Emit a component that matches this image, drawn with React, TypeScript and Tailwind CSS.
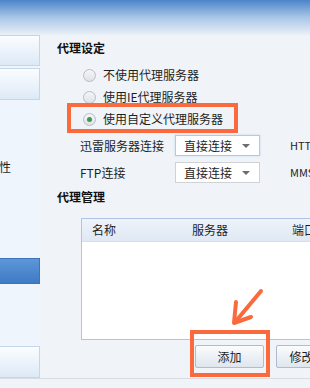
import React from "react";

const FONT = { fontFamily: '"Noto Sans CJK SC", "Liberation Sans", sans-serif' };

function Radio({ checked, label }: { checked?: boolean; label: string }) {
  return (
    <div className="flex h-[22px] items-center gap-[7px]">
      <span className="flex h-[13px] w-[13px] items-center justify-center rounded-full border border-[#b9bec6] bg-gradient-to-b from-[#f4f5f7] to-[#dfe2e6]">
        {checked && <span className="h-[5px] w-[5px] rounded-full bg-[#3c9a48]" />}
      </span>
      <span className="text-[12px] leading-none text-[#1e1e1e]">{label}</span>
    </div>
  );
}

function Select({ focused }: { focused?: boolean }) {
  return (
    <div
      className={`flex h-[21px] w-[85px] items-center justify-between border bg-white pl-[8px] pr-[9px] ${
        focused ? "border-[#a9cdf0] shadow-[0_0_2px_#bcdcf7]" : "border-[#cfd3d8]"
      }`}
    >
      <span className="text-[12px] leading-none text-[#1e1e1e]">直接连接</span>
      <span className="h-0 w-0 border-x-[4px] border-t-[4px] border-x-transparent border-t-[#6d6d6d]" />
    </div>
  );
}

function SideBtn({ className = "" }: { className?: string }) {
  return (
    <div
      className={`w-[40px] border border-l-0 border-[#c3d6ec] bg-gradient-to-b from-[#fbfdff] to-[#dde9f7] ${className}`}
    />
  );
}

export default function App() {
  return (
    <div className="relative h-[388px] w-[310px] overflow-hidden bg-[#f0f3f7]" style={FONT}>
      <div className="h-[35px] bg-gradient-to-b from-[#4a85c9] via-[#a9c6e8] to-[#eaf0f7]" />

      <div className="flex h-[344px] border-b border-[#d8dde3]">
        {/* sidebar */}
        <div className="flex w-[40px] flex-col bg-[#eef5fd]">
          <SideBtn className="h-[31px]" />
          <SideBtn className="mt-[2px] h-[32px]" />
          <div className="ml-[-13px] mt-[59px] text-[12px] leading-4 text-[#1e1e1e]">属性</div>
          <div className="mt-[83px] h-[26px] w-[40px] border border-l-0 border-[#3b74bb] bg-gradient-to-b from-[#5d96d8] to-[#3f7bc5]" />
          <SideBtn className="mt-[62px] h-[32px]" />
        </div>

        {/* main */}
        <div className="flex-1 pt-[5px]">
          <h3 className="pl-[17px] text-[12px] font-bold leading-4 text-[#111]">代理设定</h3>

          <div className="mt-[8px] pl-[43px]">
            <Radio label="不使用代理服务器" />
            <Radio label="使用IE代理服务器" />
            <Radio checked label="使用自定义代理服务器" />
          </div>

          <div className="mt-[5px] flex flex-col gap-[6px] pl-[40px]">
            <div className="flex items-center whitespace-nowrap">
              <span className="w-[95px] text-[12px] leading-none text-[#1e1e1e]">迅雷服务器连接</span>
              <Select focused />
              <span className="ml-[30px] text-[11px] leading-none text-[#1e1e1e]">HTTP连接</span>
            </div>
            <div className="flex items-center whitespace-nowrap">
              <span className="w-[95px] text-[12px] leading-none text-[#1e1e1e]">FTP连接</span>
              <Select />
              <span className="ml-[30px] text-[11px] leading-none text-[#1e1e1e]">MMS/RTSP连接</span>
            </div>
          </div>

          <h3 className="mt-[6px] pl-[17px] text-[12px] font-bold leading-4 text-[#111]">代理管理</h3>

          <div className="ml-[41px] mt-[13px] h-[122px] w-[300px] border border-r-0 border-[#adc6e6] bg-white">
            <div className="flex h-[23px] items-center border-b border-[#d3dfee] bg-gradient-to-b from-[#eef3fa] to-[#dfe8f4] text-[12px] text-[#1e1e1e]">
              <span className="w-[100px] pl-[10px]">名称</span>
              <span className="w-[100px] pl-[10px]">服务器</span>
              <span className="pl-[10px]">端口</span>
            </div>
          </div>

          <div className="ml-[155px] mt-[5px] flex gap-[12px]">
            <button className="h-[23px] w-[69px] rounded-[2px] border border-[#aebccb] bg-gradient-to-b from-[#fbfcfd] to-[#dfe6ee] text-[12px] text-[#1e1e1e]">
              添加
            </button>
            <button className="h-[23px] w-[69px] shrink-0 rounded-[2px] border border-[#aebccb] bg-gradient-to-b from-[#fbfcfd] to-[#dfe6ee] pr-[18px] text-[12px] text-[#1e1e1e]">
              修改
            </button>
          </div>
        </div>
      </div>

      {/* annotations */}
      <div className="pointer-events-none absolute left-[67px] top-[103px] h-[30px] w-[171px] border-[4px] border-[#fa6a3c]" />
      <div className="pointer-events-none absolute left-[190px] top-[330px] h-[47px] w-[80px] border-[4px] border-[#fa6a3c]" />
      <svg className="pointer-events-none absolute left-0 top-0" width="310" height="388">
        <g stroke="#fa6a3c" strokeWidth="4" strokeLinecap="round" strokeLinejoin="round" fill="none">
          <line x1="261" y1="291" x2="236" y2="321" />
          <polyline points="236,302 234,323 251,317" />
        </g>
      </svg>
    </div>
  );
}
